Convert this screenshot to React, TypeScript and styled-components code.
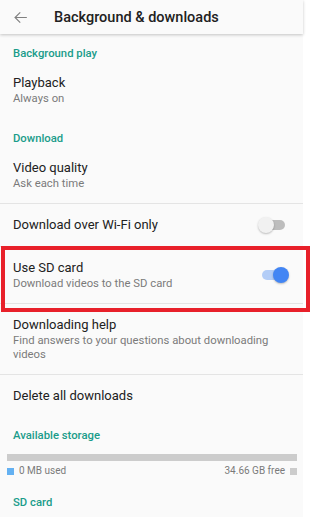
import React from "react";
import styled, { createGlobalStyle } from "styled-components";

const GlobalStyle = createGlobalStyle`
  html, body {
    margin: 0;
    padding: 0;
    background: #ffffff;
  }
  body {
    font-family: Roboto, "Noto Sans", "Liberation Sans", sans-serif;
    -webkit-font-smoothing: antialiased;
  }
`;

const Screen = styled.div`
  width: 303px;
  height: 517px;
  overflow: visible;
  background: #fafafa;
  display: flex;
  flex-direction: column;
`;

const Header = styled.header`
  height: 34px;
  flex-shrink: 0;
  display: flex;
  align-items: center;
  background: #fafafa;
  box-shadow: 0 1px 3px rgba(0, 0, 0, 0.22);
  position: relative;
  z-index: 1;
`;

const BackButton = styled.span`
  width: 19px;
  height: 19px;
  margin-left: 11px;
  margin-right: 24px;
  display: flex;
  color: #808080;
`;

const Title = styled.h1`
  margin: 0;
  font-size: 14.5px;
  font-weight: 500;
  color: #212121;
`;

const Content = styled.main`
  display: flex;
  flex-direction: column;
  margin-top: 1px;
`;

const Group = styled.section<{ $bottom?: number }>`
  display: flex;
  flex-direction: column;
  padding-bottom: ${(p) => p.$bottom ?? 0}px;
`;

const SectionTitle = styled.h2`
  margin: 0;
  padding: 11px 13px 0;
  font-size: 11.3px;
  line-height: 16px;
  font-weight: 500;
  color: #1a9c8a;
`;

const Row = styled.div<{ $divider?: boolean; $marked?: boolean }>`
  position: relative;
  display: flex;
  align-items: center;
  padding: 12px 14px 12px 13px;
  border-bottom: ${(p) => (p.$divider ? "1px solid #e4e4e4" : "none")};

  ${(p) =>
    p.$marked &&
    `
    &::after {
      content: "";
      position: absolute;
      top: -1px;
      left: 1px;
      right: -7px;
      bottom: -9px;
      border: 4px solid #e8202a;
      pointer-events: none;
    }
  `}
`;

const RowText = styled.div`
  flex: 1;
  display: flex;
  flex-direction: column;
`;

const RowTitle = styled.div`
  font-size: 13px;
  line-height: 18px;
  color: #212121;
`;

const RowSub = styled.div`
  font-size: 11.3px;
  line-height: 14px;
  color: #7a7a7a;
`;

const Track = styled.span<{ $on: boolean }>`
  position: relative;
  width: 31px;
  height: 16px;
  flex-shrink: 0;
  display: flex;
  align-items: center;

  &::before {
    content: "";
    position: absolute;
    left: 4px;
    right: 4px;
    height: 10px;
    border-radius: 5px;
    background: ${(p) => (p.$on ? "#b3cdf7" : "#bdbdbd")};
  }
`;

const Thumb = styled.span<{ $on: boolean }>`
  position: absolute;
  top: 0;
  left: ${(p) => (p.$on ? "15px" : "0")};
  width: 16px;
  height: 16px;
  border-radius: 50%;
  background: ${(p) => (p.$on ? "#4285f4" : "#f1f1f1")};
  box-shadow: 0 1px 2px rgba(0, 0, 0, 0.25);
`;

const Switch: React.FC<{ on: boolean }> = ({ on }) => (
  <Track $on={on}>
    <Thumb $on={on} />
  </Track>
);

const Storage = styled.div`
  display: flex;
  flex-direction: column;
  padding: 10px 6px 7px 7px;
`;

const Bar = styled.div`
  height: 7px;
  background: #cccccc;
`;

const Legend = styled.div`
  display: flex;
  align-items: center;
  justify-content: space-between;
  margin-top: 4px;
  font-size: 10px;
  line-height: 12px;
  color: #7a7a7a;
`;

const LegendItem = styled.span`
  display: flex;
  align-items: center;
  gap: 5px;
`;

const Swatch = styled.span<{ $color: string }>`
  width: 7px;
  height: 7px;
  background: ${(p) => p.$color};
`;

const ArrowBack = () => (
  <svg viewBox="0 0 24 24" width="19" height="19" fill="currentColor">
    <path d="M20 11.25H6.9l5.3-5.3-1.05-1.05L4.05 12l7.1 7.1 1.05-1.05-5.3-5.3H20z" />
  </svg>
);

const App: React.FC = () => {
  return (
    <>
      <GlobalStyle />
      <Screen>
        <Header>
          <BackButton>
            <ArrowBack />
          </BackButton>
          <Title>Background &amp; downloads</Title>
        </Header>
        <Content>
          <Group $bottom={2}>
            <SectionTitle>Background play</SectionTitle>
            <Row>
              <RowText>
                <RowTitle>Playback</RowTitle>
                <RowSub>Always on</RowSub>
              </RowText>
            </Row>
          </Group>
          <Group>
            <SectionTitle>Download</SectionTitle>
            <Row $divider>
              <RowText>
                <RowTitle>Video quality</RowTitle>
                <RowSub>Ask each time</RowSub>
              </RowText>
            </Row>
            <Row $divider>
              <RowText>
                <RowTitle>Download over Wi-Fi only</RowTitle>
              </RowText>
              <Switch on={false} />
            </Row>
            <Row $divider $marked>
              <RowText>
                <RowTitle>Use SD card</RowTitle>
                <RowSub>Download videos to the SD card</RowSub>
              </RowText>
              <Switch on />
            </Row>
            <Row $divider>
              <RowText>
                <RowTitle>Downloading help</RowTitle>
                <RowSub>
                  Find answers to your questions about downloading videos
                </RowSub>
              </RowText>
            </Row>
            <Row>
              <RowText>
                <RowTitle>Delete all downloads</RowTitle>
              </RowText>
            </Row>
          </Group>
          <Group>
            <SectionTitle>Available storage</SectionTitle>
            <Storage>
              <Bar />
              <Legend>
                <LegendItem>
                  <Swatch $color="#64b1f2" />
                  0 MB used
                </LegendItem>
                <LegendItem>
                  34.66 GB free
                  <Swatch $color="#cccccc" />
                </LegendItem>
              </Legend>
            </Storage>
          </Group>
          <Group>
            <SectionTitle>SD card</SectionTitle>
          </Group>
        </Content>
      </Screen>
    </>
  );
};

export default App;
